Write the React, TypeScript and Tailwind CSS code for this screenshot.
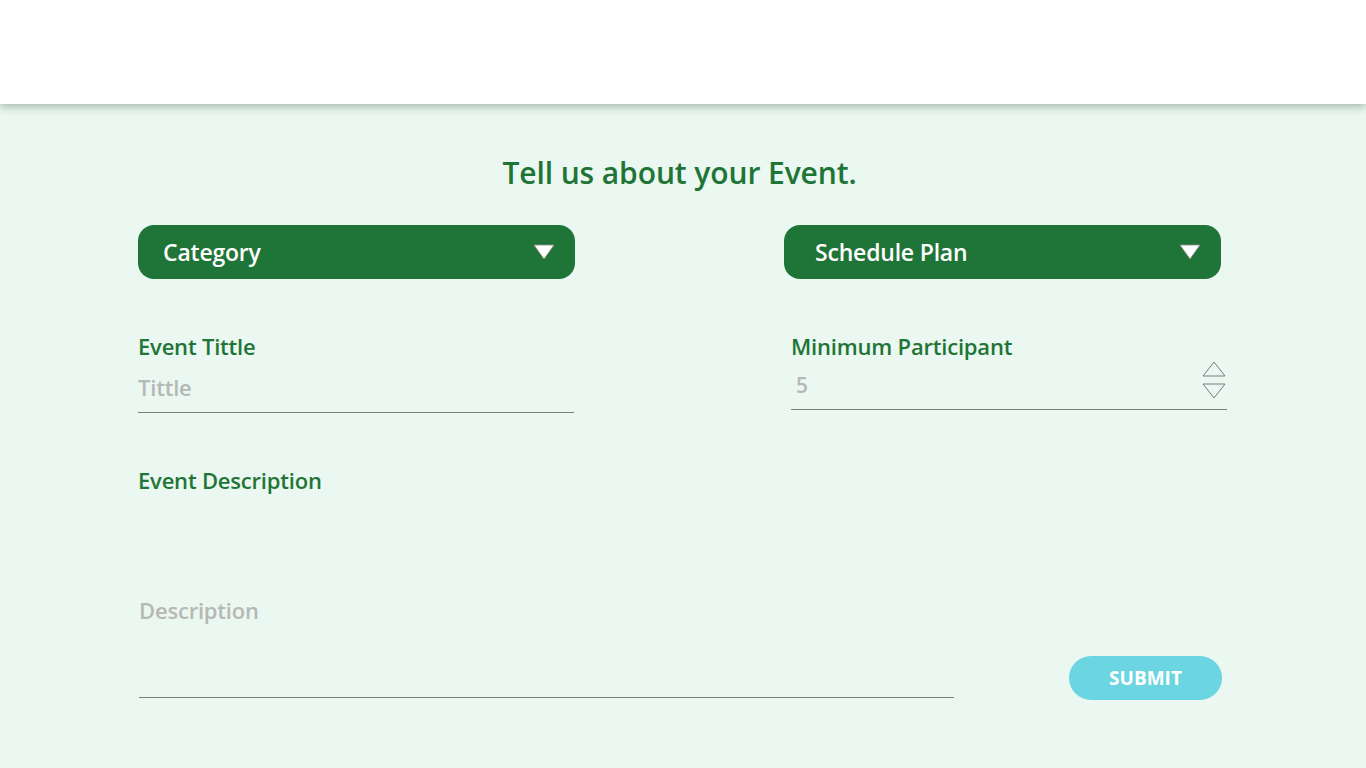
import React from "react";

const font = { fontFamily: '"Open Sans", "Noto Sans", sans-serif' };

function Caret() {
  return (
    <svg width="22" height="16" viewBox="0 0 22 16">
      <polygon points="1,1 21,1 11,15" fill="#ffffff" stroke="#8a8a8a" strokeWidth="0.8" />
    </svg>
  );
}

function Dropdown({ label, pad }: { label: string; pad: string }) {
  return (
    <button className={`flex h-[54px] w-[437px] items-center justify-between rounded-[16px] bg-[#1f7537] pr-[20px] text-white ${pad}`}>
      <span className="text-[23px] font-semibold tracking-[-0.2px]">{label}</span>
      <Caret />
    </button>
  );
}

function Spinner() {
  return (
    <div className="flex flex-col gap-[6px]">
      <svg width="24" height="16" viewBox="0 0 24 16">
        <polygon points="1,15 23,15 12,1" fill="none" stroke="#7a7a7a" strokeWidth="1" />
      </svg>
      <svg width="24" height="16" viewBox="0 0 24 16">
        <polygon points="1,1 23,1 12,15" fill="none" stroke="#7a7a7a" strokeWidth="1" />
      </svg>
    </div>
  );
}

export default function App() {
  return (
    <div className="min-h-[768px] w-full bg-[#ebf7f1]" style={font}>
      <header className="relative z-10 h-[104px] bg-white shadow-[0_3px_8px_rgba(80,110,95,0.45)]" />
      <main className="ml-[138px] w-[1083px] pt-[49px]">
        <h1 className="text-center text-[30px] font-semibold leading-[40px] tracking-[-0.1px] text-[#1e7536]">
          Tell us about your Event.
        </h1>
        <div className="mt-[32px] flex justify-between">
          <Dropdown label="Category" pad="pl-[25px]" />
          <Dropdown label="Schedule Plan" pad="pl-[31px]" />
        </div>
        <div className="mt-[52px] flex w-[1089px] items-start">
          <div className="w-[436px] shrink-0">
            <div className="text-[22px] font-semibold leading-[30px] tracking-[-0.2px] text-[#1e7536]">
              Event Tittle
            </div>
            <div className="mt-[12px] border-b border-[#7d7d7d] pb-[11px] text-[22px] font-semibold leading-[28px] tracking-[-0.2px] text-[#b5b9b5]">
              Tittle
            </div>
          </div>
          <div className="ml-[217px] w-[436px] shrink-0">
            <div className="text-[22px] font-semibold leading-[30px] tracking-[-0.2px] text-[#1e7536]">
              Minimum Participant
            </div>
            <div className="flex items-center justify-between border-b border-[#7d7d7d] pb-[10px] pr-[1px]">
              <span className="mt-[9px] pl-[5px] text-[21px] font-semibold leading-[28px] text-[#b5b9b5]">5</span>
              <Spinner />
            </div>
          </div>
        </div>
        <div className="mt-[52px] text-[22px] font-semibold leading-[30px] tracking-[-0.2px] text-[#1e7536]">
          Event Description
        </div>
        <div className="mt-[101px] flex items-end">
          <div className="ml-[1px] w-[815px] shrink-0 border-b border-[#7d7d7d] pb-[73px] text-[22px] font-semibold leading-[28px] tracking-[-0.2px] text-[#b5b9b5]">
            Description
          </div>
          <button className="mb-[-2px] ml-[115px] flex h-[44px] w-[153px] shrink-0 items-center justify-center rounded-full bg-[#6bd5e1] text-[19px] font-bold text-white">
            SUBMIT
          </button>
        </div>
      </main>
    </div>
  );
}
